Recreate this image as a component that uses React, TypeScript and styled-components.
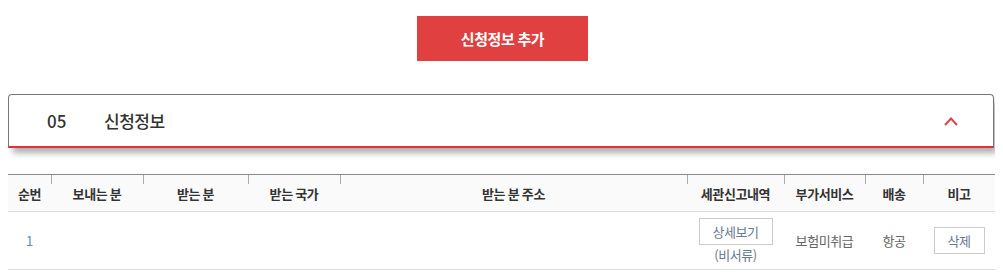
import React from "react";
import styled, { createGlobalStyle } from "styled-components";

const Global = createGlobalStyle`
  html, body { margin: 0; padding: 0; background: #fff; }
  body {
    margin: 8px;
    font-family: "Noto Sans CJK KR", "Noto Sans", "Liberation Sans", sans-serif;
    color: #333;
  }
`;

const Page = styled.div`
  display: flex;
  flex-direction: column;
`;

const AddBar = styled.div`
  display: flex;
  justify-content: center;
  padding-top: 8px;
  padding-left: 2px;
`;

const AddButton = styled.button`
  width: 171px;
  height: 45px;
  border: 0;
  background: #e04040;
  color: #fff;
  font-family: inherit;
  font-size: 15px;
  font-weight: 700;
  letter-spacing: -0.4px;
  cursor: pointer;
`;

const Panel = styled.div`
  margin-top: 33px;
  height: 51px;
  width: 984px;
  box-sizing: content-box;
  border: 1px solid #777;
  border-bottom: 2px solid #e0313c;
  border-radius: 4px 4px 0 0;
  box-shadow: 4px 6px 6px -1px rgba(0, 0, 0, 0.32);
  display: flex;
  align-items: center;
`;

const PanelNo = styled.span`
  margin-left: 38px;
  width: 57px;
  font-size: 17px;
  font-weight: 500;
  color: #333;
`;

const PanelTitle = styled.span`
  flex: 1;
  font-size: 17px;
  font-weight: 500;
  color: #333;
  letter-spacing: -0.5px;
`;

const Toggle = styled.span`
  display: flex;
  margin-right: 33px;
  width: 18px;
  height: 12px;
  align-items: center;
  justify-content: center;
`;

const Table = styled.table`
  margin-top: 26px;
  width: 987px;
  border-collapse: collapse;
  table-layout: fixed;
  border-top: 1px solid #888;
`;

const Th = styled.th<{ $tick?: boolean }>`
  position: relative;
  height: 36px;
  padding: 0;
  background: #fafafa;
  border-bottom: 1px solid #ddd;
  font-size: 13px;
  font-weight: 700;
  color: #333;
  text-align: center;
  letter-spacing: -0.4px;
  &::before {
    content: "";
    display: ${(p) => (p.$tick ? "block" : "none")};
    position: absolute;
    left: 0;
    top: 0;
    width: 1px;
    height: 9px;
    background: #aaa;
  }
`;

const Td = styled.td<{ $tone?: "num" | "plain" }>`
  height: 57px;
  padding: 0;
  border-bottom: 1px solid #ddd;
  text-align: center;
  vertical-align: middle;
  font-size: 13px;
  letter-spacing: -0.4px;
  color: ${(p) => (p.$tone === "num" ? "#6f86ab" : "#666")};
`;

const Stack = styled.div`
  display: flex;
  flex-direction: column;
  align-items: center;
`;

const LineButton = styled.button<{ $w: number }>`
  width: ${(p) => p.$w}px;
  height: 27px;
  border: 1px solid #ccc;
  background: #fff;
  color: #6a7890;
  font-family: inherit;
  font-size: 13px;
  letter-spacing: -0.4px;
  padding: 0;
  cursor: pointer;
`;

const Note = styled.span`
  margin-top: 1px;
  line-height: 18px;
  color: #6a7890;
`;

const cols = [43, 92, 105, 92, 347, 97, 81, 58, 72];
const heads = ["순번", "보내는 분", "받는 분", "받는 국가", "받는 분 주소", "세관신고내역", "부가서비스", "배송", "비고"];

export default function App() {
  return (
    <Page>
      <Global />
      <AddBar>
        <AddButton>신청정보 추가</AddButton>
      </AddBar>
      <Panel>
        <PanelNo>05</PanelNo>
        <PanelTitle>신청정보</PanelTitle>
        <Toggle>
          <svg width="16" height="10" viewBox="0 0 16 10">
            <polyline points="2,9 8,2.5 14,9" fill="none" stroke="#e8404a" strokeWidth="2" />
          </svg>
        </Toggle>
      </Panel>
      <Table>
        <colgroup>
          {cols.map((w, i) => (
            <col key={i} style={{ width: w }} />
          ))}
        </colgroup>
        <thead>
          <tr>
            {heads.map((h, i) => (
              <Th key={h} $tick={i > 0}>
                {h}
              </Th>
            ))}
          </tr>
        </thead>
        <tbody>
          <tr>
            <Td $tone="num">1</Td>
            <Td />
            <Td />
            <Td />
            <Td />
            <Td>
              <Stack>
                <LineButton $w={74}>상세보기</LineButton>
                <Note>(비서류)</Note>
              </Stack>
            </Td>
            <Td>보험미취급</Td>
            <Td>항공</Td>
            <Td>
              <LineButton $w={51}>삭제</LineButton>
            </Td>
          </tr>
        </tbody>
      </Table>
    </Page>
  );
}
